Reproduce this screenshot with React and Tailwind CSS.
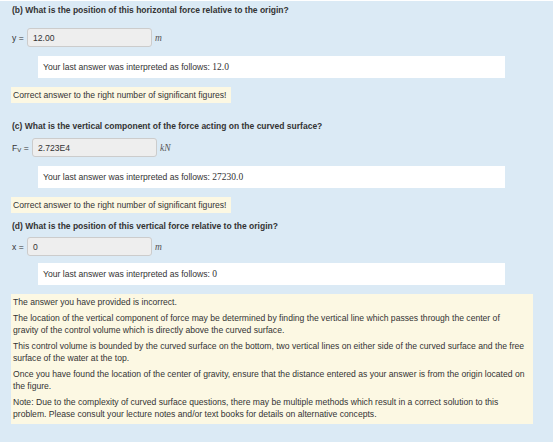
import React from 'react';

const Interpreted = ({ value }) => (
  <div className="ml-[27px] w-[467px] h-[22px] bg-white flex items-center pl-[5px]">
    <span>Your last answer was interpreted as follows:&nbsp;</span>
    <span className="font-['Liberation_Serif',serif] text-[9.5px]">{value}</span>
  </div>
);

const Feedback = ({ children, className = '' }) => (
  <div className={`bg-[#fcf8e3] pl-[2px] ${className}`}>{children}</div>
);

const AnswerRow = ({ label, value, unit, labelWidth = 'w-[15px]' }) => (
  <div className="flex items-center h-[19px] pl-px">
    <span className={`${labelWidth} shrink-0 whitespace-nowrap`}>{label}</span>
    <div className="w-[125px] h-[19px] bg-[#eeeeee] border border-[#cccccc] rounded-[3px] flex items-center pl-[5px]">
      {value}
    </div>
    <span className="ml-[3px] font-['Liberation_Serif',serif] italic text-[9.5px] text-[#555]">{unit}</span>
  </div>
);

const App = () => {
  return (
    <div className="w-[560px] h-[442px] bg-white overflow-hidden font-['Liberation_Sans',Arial,sans-serif] text-[8.6px] text-[#333] leading-[12px]">
      <div className="w-[553px] h-[441px] mt-[1px] bg-[#dbeaf5] pl-[11px] pt-[3px]">
        <h4 className="pl-px font-bold text-[8.5px] h-[12px]">
          (b) What is the position of this horizontal force relative to the origin?
        </h4>
        <div className="mt-[12px]">
          <AnswerRow label="y =" value="12.00" unit="m" />
        </div>
        <div className="mt-[9px]">
          <Interpreted value="12.0" />
        </div>
        <Feedback className="mt-[9px] w-[220px] h-[16px] flex items-center whitespace-nowrap">
          Correct answer to the right number of significant figures!
        </Feedback>

        <h4 className="mt-[17px] pl-px font-bold text-[8.5px] h-[12px]">
          (c) What is the vertical component of the force acting on the curved surface?
        </h4>
        <div className="mt-[6px]">
          <AnswerRow
            label={<span>F<sub className="text-[6px]">V</sub> =</span>}
            value="2.723E4"
            unit="kN"
            labelWidth="w-[20px]"
          />
        </div>
        <div className="mt-[9px]">
          <Interpreted value="27230.0" />
        </div>
        <Feedback className="mt-[9px] w-[220px] h-[16px] flex items-center whitespace-nowrap">
          Correct answer to the right number of significant figures!
        </Feedback>

        <h4 className="mt-[7px] pl-px font-bold text-[8.5px] h-[12px]">
          (d) What is the position of this vertical force relative to the origin?
        </h4>
        <div className="mt-[5px]">
          <AnswerRow label="x =" value="0" unit="m" />
        </div>
        <div className="mt-[7px]">
          <Interpreted value="0" />
        </div>
        <Feedback className="mt-[9px] w-[522px] pr-[7px] pt-[2px] pb-[3px] leading-[12.5px] space-y-[3px]">
          <p>The answer you have provided is incorrect.</p>
          <p>
            The location of the vertical component of force may be determined by finding the vertical line which passes through the center of gravity of the control volume which is directly above the curved surface.
          </p>
          <p>
            This control volume is bounded by the curved surface on the bottom, two vertical lines on either side of the curved surface and the free surface of the water at the top.
          </p>
          <p>
            Once you have found the location of the center of gravity, ensure that the distance entered as your answer is from the origin located on the figure.
          </p>
          <p>
            Note: Due to the complexity of curved surface questions, there may be multiple methods which result in a correct solution to this problem. Please consult your lecture notes and/or text books for details on alternative concepts.
          </p>
        </Feedback>
      </div>
    </div>
  );
};

export default App;
